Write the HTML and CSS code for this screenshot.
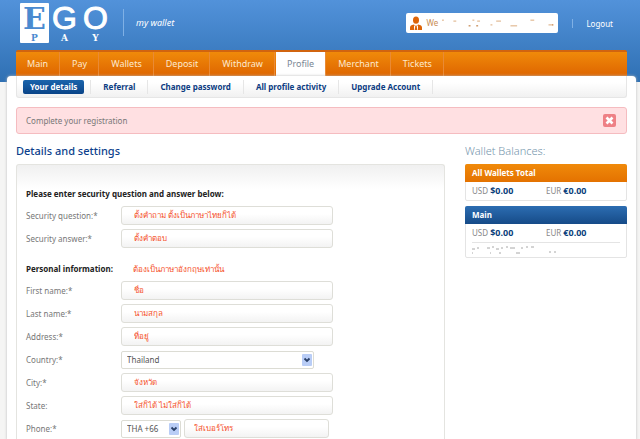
FILE: index.html
```html
<!DOCTYPE html>
<html lang="en">
<head>
    <meta charset="UTF-8">
    <meta name="viewport" content="width=device-width, initial-scale=1.0">
    <title>EgoPay - Profile</title>
    <link rel="stylesheet" href="styles.css">
</head>
<body>
    <div class="page">
        <header class="header">
            <a href="#" class="logo">
                <span class="logo-letter logo-first">E<small>P</small></span>
                <span class="logo-letter">G<small>A</small></span>
                <span class="logo-letter">O<small>Y</small></span>
            </a>
            <span class="slogan">my wallet</span>
            <div class="user-box">
                <svg class="user-icon" width="12" height="15" viewBox="0 0 12 15">
                    <ellipse cx="6" cy="4.200" rx="3" ry="3.600" fill="#dd6408"/>
                    <path d="M0 14V11.500Q0 9 3.800 8.500L6 10L8.200 8.500Q12 9 12 11.500V14Z" fill="#dd6408"/>
                    <path d="M4 9L5.300 10.500L4.600 14H4ZM8 9L6.700 10.500L7.400 14H8Z" fill="#fff"/>
                </svg>
                <span>We</span>
                <!-- erased user name -->
                <svg class="user-smudge" width="118" height="10" viewBox="0 0 118 10" fill="none" stroke="#d9a878">
                    <path d="M0 2h2M12 3h3M32 2h2M37 3h3M57 3h5M93 2h4M72 8h7M51 7h2M112 7h5"/>
                    <path d="M28 8h2M36 8h2M116 7h1" stroke="#b5651d"/>
                </svg>
            </div>
            <a href="#" class="logout">Logout</a>
        </header>

        <nav class="nav">
            <a href="#">Main</a>
            <a href="#">Pay</a>
            <a href="#">Wallets</a>
            <a href="#">Deposit</a>
            <a href="#">Withdraw</a>
            <a href="#" class="active">Profile</a>
            <a href="#">Merchant</a>
            <a href="#">Tickets</a>
        </nav>

        <main class="content">
            <nav class="subnav">
                <a href="#"><span class="current">Your details</span></a>
                <a href="#">Referral</a>
                <a href="#">Change password</a>
                <a href="#">All profile activity</a>
                <a href="#">Upgrade Account</a>
            </nav>

            <div class="alert">
                <span>Complete your registration</span>
                <button type="button" class="alert-close" aria-label="Close">
                    <svg width="13" height="13" viewBox="0 0 13 13">
                        <path d="M3.500 3.500L9.500 9.500M9.500 3.500L3.500 9.500" stroke="#fff" stroke-width="2.600"/>
                    </svg>
                </button>
            </div>

            <div class="columns">
                <section class="details">
                    <h1>Details and settings</h1>
                    <form class="panel">
                        <h2>Please enter security question and answer below:</h2>
                        <div class="row">
                            <label for="question">Security question:*</label>
                            <input type="text" id="question" value="ตั้งคำถาม ตั้งเป็นภาษาไทยก็ได้">
                        </div>
                        <div class="row">
                            <label for="answer">Security answer:*</label>
                            <input type="text" id="answer" value="ตั้งคำตอบ">
                        </div>

                        <div class="group-title">
                            <h2>Personal information:</h2>
                            <span class="note">ต้องเป็นภาษาอังกฤษเท่านั้น</span>
                        </div>
                        <div class="row">
                            <label for="firstname">First name:*</label>
                            <input type="text" id="firstname" value="ชื่อ">
                        </div>
                        <div class="row">
                            <label for="lastname">Last name:*</label>
                            <input type="text" id="lastname" value="นามสกุล">
                        </div>
                        <div class="row">
                            <label for="address">Address:*</label>
                            <input type="text" id="address" value="ที่อยู่">
                        </div>
                        <div class="row">
                            <label for="country">Country:*</label>
                            <span class="select country">
                                <select id="country"><option>Thailand</option></select>
                                <svg class="arrow" width="10" height="12" viewBox="0 0 10 12">
                                    <path d="M2.500 4.500L5 7L7.500 4.500" fill="none" stroke="#2a4068" stroke-width="1.800"/>
                                </svg>
                            </span>
                        </div>
                        <div class="row">
                            <label for="city">City:*</label>
                            <input type="text" id="city" value="จังหวัด">
                        </div>
                        <div class="row">
                            <label for="state">State:</label>
                            <input type="text" id="state" value="ใส่ก็ได้ ไม่ใส่ก็ได้">
                        </div>
                        <div class="row">
                            <label for="phone">Phone:*</label>
                            <div class="phone">
                                <span class="select">
                                    <select aria-label="Country code"><option>THA +66</option></select>
                                    <svg class="arrow" width="10" height="12" viewBox="0 0 10 12">
                                        <path d="M2.500 4.500L5 7L7.500 4.500" fill="none" stroke="#2a4068" stroke-width="1.800"/>
                                    </svg>
                                </span>
                                <input type="text" id="phone" value="ใส่เบอร์โทร">
                            </div>
                        </div>
                    </form>
                </section>

                <aside class="wallets">
                    <h1>Wallet Balances:</h1>
                    <div class="wallet total">
                        <h3>All Wallets Total</h3>
                        <div class="amounts">
                            <span>USD <b>$0.00</b></span>
                            <span>EUR <b>€0.00</b></span>
                        </div>
                    </div>
                    <div class="wallet">
                        <h3>Main</h3>
                        <div class="amounts">
                            <span>USD <b>$0.00</b></span>
                            <span>EUR <b>€0.00</b></span>
                        </div>
                        <div class="account">
                            <svg width="84" height="9" viewBox="0 0 84 9" fill="none" stroke="#a8a8a8">
                                <path d="M0 3h3M5 2h2M15 2h3M20 1h2M24 3h3M29 2h2M34 1h2M38 2h5M49 2h2M54 1h2M59 1h3M0 7h1M18 7h1M27 7h2M44 7h4M77 6h2M82 6h2"/>
                            </svg>
                        </div>
                    </div>
                </aside>
            </div>
        </main>
    </div>
</body>
</html>
```

FILE: styles.css
```css
* {
    box-sizing: border-box;
}

body {
    margin: 0;
    font-family: "Noto Sans", "Open Sans", sans-serif;
    font-size: 8px;
    line-height: 12px;
    color: #777;
    background: #f5f5f4 linear-gradient(#5292da, #2f70b3) no-repeat;
    background-size: 100% 82px;
}

a {
    color: inherit;
    text-decoration: none;
}

h1, h2, h3 {
    margin: 0;
}

.page {
    display: flex;
    flex-direction: column;
    min-height: 100vh;
    margin: 0 4px 0 7px;
}

/* Header */
.header {
    display: flex;
    align-items: flex-start;
    height: 50px;
    padding: 3px 23px 0 13px;
    color: #fff;
}

.logo {
    display: flex;
    height: 40px;
    padding-right: 12px;
    font-family: "Liberation Sans", sans-serif;
    font-size: 32px;
    line-height: 31px;
    -webkit-text-stroke: 1px #fff;
}

.logo-letter {
    display: flex;
    flex-direction: column;
    align-items: center;
    width: 31px;
}

.logo-letter small {
    font-family: "DejaVu Serif", serif;
    font-size: 9px;
    font-weight: bold;
    line-height: 9px;
    -webkit-text-stroke: 0;
}

.logo-first {
    width: 29px;
    border-radius: 1px;
    background: #fff;
    color: #4a8ad0;
    font-family: "DejaVu Serif", serif;
    font-size: 30px;
    font-weight: bold;
    -webkit-text-stroke: 0;
}

.slogan {
    margin-top: 6px;
    padding: 8px 12px 7px;
    border-left: 1px solid #7fb0e5;
    font-size: 9px;
    font-style: italic;
}

.user-box {
    display: flex;
    align-items: center;
    gap: 4px;
    width: 152px;
    height: 20px;
    margin: 10px 14px 0 auto;
    padding: 0 4px;
    border-radius: 2px;
    background: #fff;
    color: #c98d55;
}

.user-smudge {
    flex: 1;
    min-width: 0;
}

.logout {
    margin-top: 16px;
    padding-left: 13px;
    border-left: 1px solid #7fb0e5;
    line-height: 9px;
}

/* Main menu */
.nav {
    display: flex;
    gap: 1px;
    height: 26px;
    margin: 0 9px;
    border-top: 2px solid #d1640f;
    border-radius: 2px 2px 0 0;
    background: linear-gradient(#f08a0a, #de6500);
    color: #fde9cf;
    font-size: 9px;
    line-height: 24px;
}

.nav a {
    padding: 0 11px;
    border-right: 1px solid #e98a35;
}

.nav a.active {
    background: #fff;
    color: #7a8794;
}

.content {
    flex: 1;
    padding: 0 9px;
    border-radius: 4px 4px 0 0;
    background: #fff;
    box-shadow: 0 0 3px #bbb;
}

.subnav {
    display: flex;
    align-items: center;
    height: 22px;
    border: 1px solid #e6e6e6;
    border-top: 0;
    border-radius: 0 0 3px 3px;
    background: linear-gradient(#fff 30%, #f1f1f1);
    color: #0c3c82;
    font-weight: bold;
}

.subnav a {
    padding: 1px 12px;
    border-right: 1px solid #e6e6e6;
}

.subnav a:first-child {
    padding: 0 6px;
}

.current {
    display: block;
    padding: 1px 7px;
    border-radius: 2px;
    background: linear-gradient(#1b64ac, #0a4488);
    color: #fff;
}

/* Notice */
.alert {
    display: flex;
    align-items: center;
    justify-content: space-between;
    height: 27px;
    margin-top: 9px;
    padding: 0 10px 0 9px;
    border: 1px solid #f5bcc0;
    border-radius: 3px;
    background: #ffe0e2;
}

.alert-close {
    width: 13px;
    height: 13px;
    padding: 0;
    border: 0;
    border-radius: 2px;
    background: #ee8085;
}

.alert-close svg {
    display: block;
}

/* Columns */
.columns {
    display: flex;
    justify-content: space-between;
    gap: 20px;
    margin-top: 9px;
}

.details {
    flex: 1;
}

.columns h1 {
    margin-bottom: 5px;
    color: #0c3f8c;
    font-size: 11px;
    line-height: 16px;
    font-weight: 500;
}

.panel {
    padding: 23px 9px 2px;
    border: 1px solid #e4e4e0;
    border-bottom: 0;
    border-radius: 3px 3px 0 0;
    background: linear-gradient(#f0f0f0, #fff 24px);
}

.panel h2 {
    color: #222;
    font-size: 8px;
    line-height: 12px;
}

.row {
    display: grid;
    grid-template-columns: 95px 212px;
    align-items: center;
    height: 19px;
    margin-top: 4px;
}

.panel h2 + .row {
    margin-top: 6px;
}

.group-title {
    display: grid;
    grid-template-columns: 107px 1fr;
    align-items: center;
    height: 12px;
    margin: 15px 0 6px;
}

.note, .row input {
    color: #f5512a;
    font-size: 8px;
}

.row input {
    width: 100%;
    height: 19px;
    min-width: 0;
    padding: 0 12px;
    border: 1px solid #deded8;
    border-radius: 3px;
    background: linear-gradient(#fff 40%, #f3f3f3);
    font-family: inherit;
}

.select {
    display: flex;
    position: relative;
}

.select select {
    width: 100%;
    height: 18px;
    padding: 0 5px;
    border: 1px solid #dcdcd4;
    border-radius: 2px;
    background: #fff;
    color: #555;
    font-family: inherit;
    font-size: 8px;
    appearance: none;
}

.arrow {
    position: absolute;
    top: 3px;
    right: 2px;
    border-radius: 1px;
    background: #b9cdf6;
}

.country {
    width: 193px;
}

.phone {
    display: grid;
    grid-template-columns: 60px 145px;
    gap: 3px;
    align-items: center;
}

.row .phone input {
    padding: 0 9px;
}

/* Wallets */
.wallets {
    width: 162px;
}

.wallets h1 {
    color: #7394ab;
    font-weight: 300;
}

.wallet {
    margin-bottom: 5px;
    border: 1px solid #e4e4e4;
    border-radius: 2px;
}

.wallet h3 {
    margin: -1px -1px 0;
    padding: 3px 7px;
    border-radius: 2px 2px 0 0;
    background: linear-gradient(#2c6db2, #164b88);
    color: #fff;
    font-size: 8px;
}

.total h3 {
    background: linear-gradient(#f08a0a, #e47200);
}

.amounts {
    display: grid;
    grid-template-columns: 1fr 1fr;
    padding: 3px 6px;
    color: #888;
}

.amounts b {
    color: #0c3f7c;
    font-size: 9px;
}

.account {
    height: 15px;
    margin: 0 6px;
    border-top: 1px solid #e4e4e4;
}

.account svg {
    display: block;
    margin-top: 3px;
}
```
